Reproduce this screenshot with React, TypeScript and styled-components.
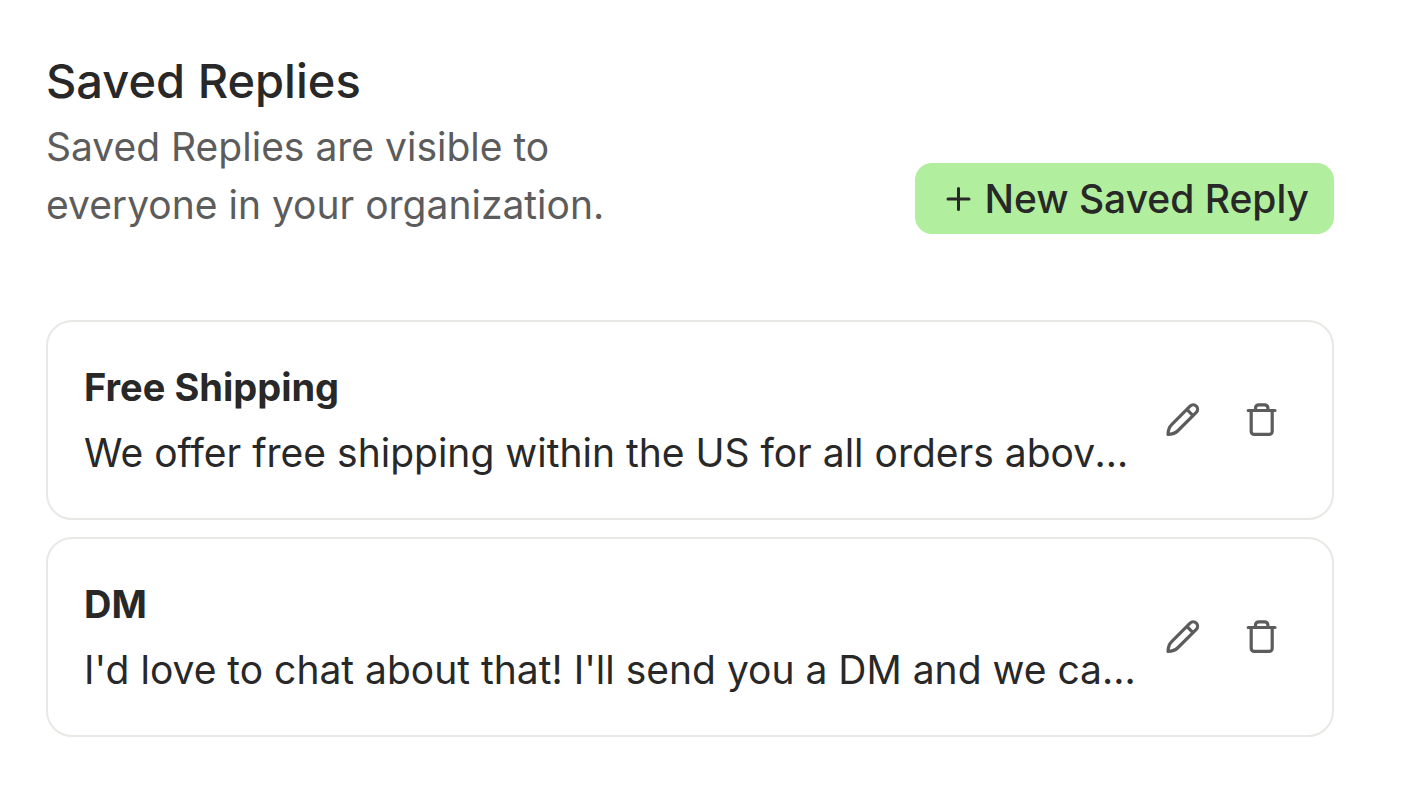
import React from "react";
import styled, { createGlobalStyle } from "styled-components";

const GlobalStyle = createGlobalStyle`
  *, *::before, *::after { box-sizing: border-box; }
  body { margin: 0; background: #fff; color: #282828; font-family: Inter, "Liberation Sans", sans-serif; }
`;

const Page = styled.main`
  padding: 46px 72px 72px 46px;
`;

const Header = styled.header`
  display: flex;
  align-items: flex-end;
  justify-content: space-between;
  gap: 32px;
  margin-bottom: 86px;
`;

const Heading = styled.div`
  max-width: 600px;
`;

const Title = styled.h1`
  margin: 0 0 2px;
  font-size: 47px;
  line-height: 70px;
  font-weight: 500;
`;

const Subtitle = styled.p`
  margin: 0;
  font-size: 39px;
  line-height: 58px;
  color: #5c5c5c;
`;

const NewButton = styled.button`
  display: flex;
  align-items: center;
  flex-shrink: 0;
  gap: 11px;
  height: 71px;
  padding: 0 25px 0 30px;
  border: 0;
  border-radius: 17px;
  background: #b1ef9f;
  color: #282828;
  font: 500 39px/58px Inter, "Liberation Sans", sans-serif;
  cursor: pointer;
`;

const ReplyList = styled.ul`
  display: grid;
  grid-template-columns: minmax(0, 1fr);
  gap: 17px;
  margin: 0;
  padding: 0;
  list-style: none;
`;

const ReplyCard = styled.li`
  display: flex;
  align-items: center;
  gap: 16px;
  padding: 36px 42px 36px 36px;
  border: 2px solid #e8e8e5;
  border-radius: 26px;
`;

const ReplyText = styled.div`
  flex: 1;
  min-width: 0;
`;

const ReplyTitle = styled.h2`
  margin: 0 0 8px;
  font-size: 38px;
  line-height: 58px;
  font-weight: 700;
`;

const ReplyBody = styled.p`
  margin: 0;
  overflow: hidden;
  font-size: 39px;
  line-height: 58px;
  white-space: nowrap;
  text-overflow: ellipsis;
`;

const Actions = styled.div`
  display: flex;
  gap: 23px;
`;

const IconButton = styled.button`
  display: grid;
  place-items: center;
  width: 56px;
  height: 56px;
  padding: 0;
  border: 0;
  background: none;
  color: #5c5c5c;
  cursor: pointer;
`;

const PlusIcon = () => (
  <svg width="28" height="28" viewBox="0 0 28 28" fill="none" stroke="currentColor" strokeWidth="3" strokeLinecap="round" aria-hidden="true">
    <path d="M13.500 3.500v21M3 14h21" />
  </svg>
);

const PencilIcon = () => (
  <svg width="40" height="40" viewBox="0 0 40 40" fill="none" stroke="currentColor" strokeWidth="3.200" strokeLinecap="round" strokeLinejoin="round" aria-hidden="true">
    <path d="M5 34.400C5 31 5.700 27.500 8.900 24.300L27.100 6.100a4.350 4.350 0 0 1 6.200 6.200L15.100 30.500C11.900 33.700 8.400 34.400 5 34.400zM23.800 9.400l6.200 6.200" />
  </svg>
);

const TrashIcon = () => (
  <svg width="40" height="40" viewBox="0 0 40 40" fill="none" stroke="currentColor" strokeWidth="3.200" strokeLinecap="round" strokeLinejoin="round" aria-hidden="true">
    <path d="M6.200 10.500h26.800M9.200 10.500v20.900a3 3 0 0 0 3 3h15a3 3 0 0 0 3-3V10.500M13.500 10.500V8a3.200 3.200 0 0 1 3.200-3.200h6a3.200 3.200 0 0 1 3.200 3.200v2.500" />
  </svg>
);

const replies = [
  { title: "Free Shipping", body: "We offer free shipping within the US for all orders above $50." },
  { title: "DM", body: "I'd love to chat about that! I'll send you a DM and we can talk more." },
];

export default function App() {
  return (
    <>
      <GlobalStyle />
      <Page>
        <Header>
          <Heading>
            <Title>Saved Replies</Title>
            <Subtitle>Saved Replies are visible to everyone in your organization.</Subtitle>
          </Heading>
          <NewButton type="button"><PlusIcon />New Saved Reply</NewButton>
        </Header>
        <ReplyList>
          {replies.map(({ title, body }) => (
            <ReplyCard key={title}>
              <ReplyText>
                <ReplyTitle>{title}</ReplyTitle>
                <ReplyBody>{body}</ReplyBody>
              </ReplyText>
              <Actions>
                <IconButton type="button" aria-label={`Edit ${title}`}><PencilIcon /></IconButton>
                <IconButton type="button" aria-label={`Delete ${title}`}><TrashIcon /></IconButton>
              </Actions>
            </ReplyCard>
          ))}
        </ReplyList>
      </Page>
    </>
  );
}
